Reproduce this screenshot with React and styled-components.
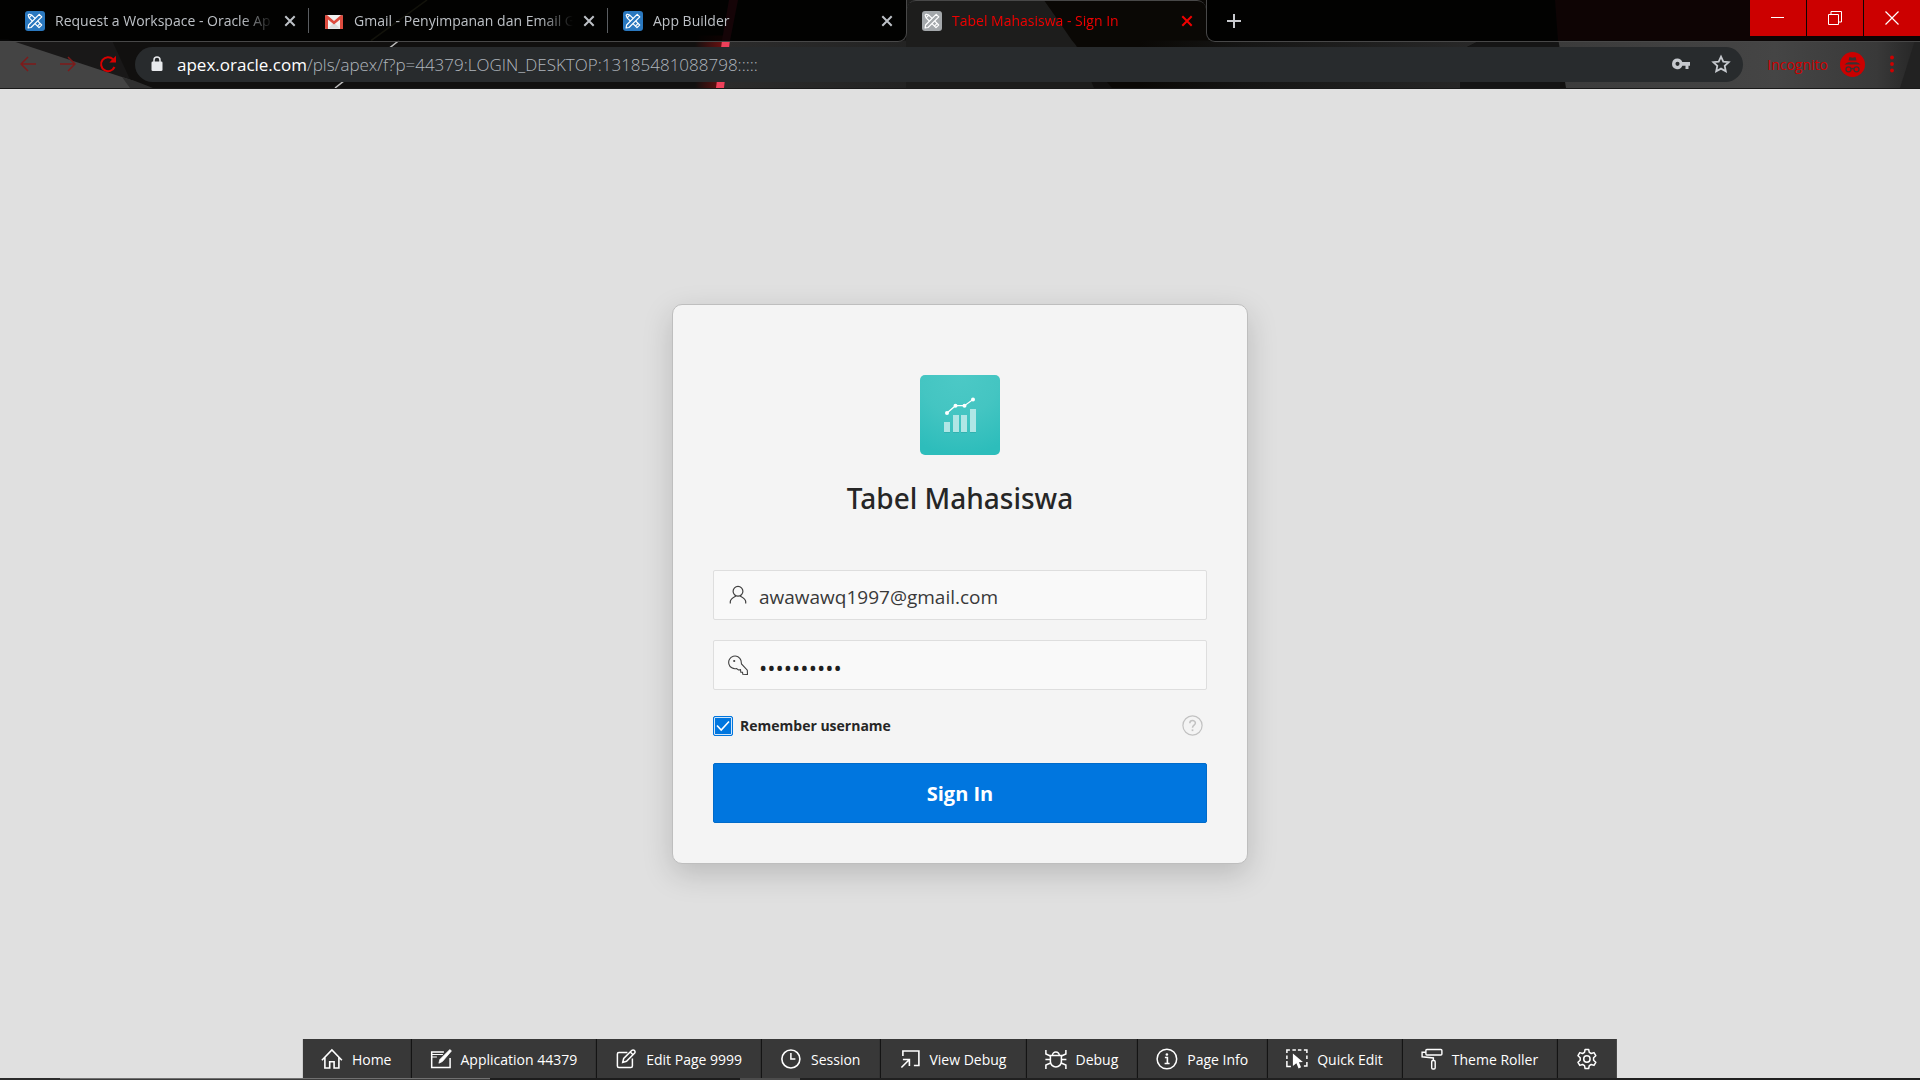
import React from "react";
import styled, { createGlobalStyle, css } from "styled-components";

const GlobalStyle = createGlobalStyle`
  *, *::before, *::after { box-sizing: border-box; }
  body {
    margin: 0;
    background: #e0e0e0;
    font-family: "Open Sans", "Noto Sans", sans-serif;
    font-size: 14px;
    color: #262626;
  }
  button, input { font: inherit; color: inherit; }
  button { margin: 0; padding: 0; border: 0; background: none; cursor: pointer; }
  svg { display: block; flex: none; }
`;

const Page = styled.div`
  display: flex;
  flex-direction: column;
  min-height: 100vh;
`;

/* ---------- Browser frame ---------- */

const Frame = styled.header`
  position: relative;
  isolation: isolate;
  background: #121110;
  border-bottom: 1px solid #191919;
  overflow: hidden;
`;

const ThemeArt = styled.svg`
  position: absolute;
  inset: 0;
  width: 100%;
  height: 100%;
  z-index: -1;
`;

const TabStrip = styled.div`
  display: flex;
  height: 42px;
`;

const stripFill = css`
  background: rgba(0, 0, 0, 0.87);
  border-bottom: 1px solid #484848;
`;

const StripLead = styled.div`
  width: 10px;
  ${stripFill}
`;

const StripRest = styled.div`
  display: flex;
  flex: 1;
  align-items: flex-start;
  justify-content: space-between;
  padding-left: 15px;
  border-left: 1px solid #484848;
  border-bottom-left-radius: 9px;
  ${stripFill}
`;

const TabList = styled.div`
  display: flex;
`;

const Tab = styled.div`
  display: flex;
  align-items: center;
  width: 299px;
  padding: 0 7px 0 15px;
  color: #bdc1c6;
  ${(p) =>
    p.$active
      ? css`
          padding-bottom: 2px;
          color: #f00000;
          border-top: 1px solid #484848;
          border-radius: 9px 9px 0 0;
          background-image: radial-gradient(circle at 9px 9px, transparent 9px, #020202 9px),
            radial-gradient(circle at 0 9px, transparent 9px, #020202 9px);
          background-size: 9px 9px;
          background-position: 0 0, 100% 0;
          background-repeat: no-repeat;
        `
      : stripFill}
  ${(p) =>
    p.$beforeActive &&
    css`
      border-right: 1px solid #484848;
      border-bottom-right-radius: 9px;
    `}
`;

const TabDivider = styled.span`
  flex: none;
  width: 1px;
  height: 25px;
  margin-right: -7px;
  margin-left: 6px;
  background: #5a5d61;
`;

const TabTitle = styled.button`
  display: flex;
  flex: 1;
  align-items: center;
  gap: 10px;
  min-width: 0;
  text-align: left;
  white-space: nowrap;
`;

const TabText = styled.span`
  flex: 1;
  min-width: 0;
  overflow: hidden;
  mask-image: linear-gradient(to right, #000 calc(100% - 36px), transparent calc(100% - 4px));
`;

const IconButton = styled.button`
  display: grid;
  place-items: center;
  width: ${(p) => p.$size || 24}px;
  height: ${(p) => p.$size || 24}px;
  color: ${(p) => p.$color || "inherit"};
`;

const NewTab = styled(IconButton)`
  margin-top: 9px;
`;

const WindowButtons = styled.div`
  display: flex;
  gap: 1px;
`;

const WindowButton = styled.button`
  display: grid;
  place-items: center;
  width: 56px;
  height: 36px;
  background: #cc0000;
  color: #fff;
`;

const NavBar = styled.div`
  display: flex;
  align-items: center;
  height: 46px;
  padding: 0 16px 2px;
`;

const NavGroup = styled.div`
  display: flex;
  gap: 16px;
  padding-right: 15px;
`;

const Omnibox = styled.div`
  display: flex;
  flex: 1;
  align-items: center;
  height: 35px;
  padding: 0 10px 0 16px;
  border-radius: 18px;
  background: #282b2d;
  color: #c6c9ce;
`;

const Address = styled.div`
  flex: 1;
  padding-left: 14px;
  font-size: 17px;
  font-weight: 300;
  color: #b0b6bd;
  outline: none;
`;

const Host = styled.span`
  font-weight: 400;
  color: #fff;
`;

const OmniActions = styled.div`
  display: flex;
  gap: 16px;
`;

const Profile = styled.button`
  display: flex;
  align-items: center;
  gap: 12px;
  margin: 0 15px 0 24px;
  color: #cf0000;
`;

/* ---------- Sign-in page ---------- */

const Main = styled.main`
  position: relative;
  display: flex;
  flex: 1;
  align-items: center;
  justify-content: center;
  padding: 49px 16px 48px;
`;

const Card = styled.form`
  display: flex;
  flex-direction: column;
  width: 100%;
  max-width: 576px;
  padding: 70px 40px 40px;
  border: 1px solid #bebebe;
  border-radius: 10px;
  background: #f4f4f4;
  box-shadow: 0 10px 30px rgba(0, 0, 0, 0.17);
`;

const AppLogo = styled.svg`
  align-self: center;
`;

const Title = styled.h1`
  margin: 25px 0 54px;
  font: 500 28px/36px "Noto Sans", sans-serif;
  text-align: center;
`;

const Fields = styled.div`
  display: grid;
  gap: 20px;
`;

const Field = styled.label`
  display: flex;
  align-items: center;
  height: 50px;
  padding-left: 14px;
  border: 1px solid #dedede;
  border-radius: 2px;
  background: #f9f9f9;
  color: #404040;
`;

const TextInput = styled.input`
  flex: 1;
  min-width: 0;
  height: 100%;
  padding: 3px 12px 0 11px;
  border: 0;
  outline: 0;
  background: none;
  font-size: ${(p) => (p.type === "password" ? 22 : 19)}px;
  color: ${(p) => (p.type === "password" ? "#202020" : "#393939")};
`;

const RememberRow = styled.div`
  display: flex;
  align-items: center;
  justify-content: space-between;
  margin: 25px 4px 27px 0;
`;

const Remember = styled.label`
  display: flex;
  align-items: center;
  gap: 7px;
  font-weight: 700;
`;

const CheckBox = styled.span`
  display: grid;
  color: #fff;
  & > * { grid-area: 1 / 1; }
`;

const CheckInput = styled.input`
  appearance: none;
  width: 20px;
  height: 20px;
  margin: 0;
  border: 1px solid #0076df;
  border-radius: 2px;
  &:checked {
    background: #0076df;
    box-shadow: inset 0 0 0 1px #cfe5fa;
  }
  & + svg { pointer-events: none; }
  &:not(:checked) + svg { visibility: hidden; }
`;

const SignIn = styled.button`
  height: 60px;
  border: 1px solid #006bca;
  border-radius: 2px;
  background: #0076df;
  color: #fff;
  font-size: 20px;
  font-weight: 700;
`;

/* ---------- Developer toolbar ---------- */

const DevBar = styled.nav`
  position: absolute;
  bottom: 0;
  left: 50%;
  display: flex;
  height: 39px;
  transform: translateX(-50%);
  background: #383838;
`;

const DevItem = styled.button`
  display: flex;
  align-items: center;
  gap: 9px;
  padding: 1px 19px 0 18px;
  border-right: 1px solid #101010;
  color: #fff;
  white-space: nowrap;
  &:last-child { border-right: 0; }
`;

/* ---------- Desktop task bar edge ---------- */

const TaskBar = styled.footer`
  display: flex;
  height: 2px;
  background: #202020;
`;

const TaskSlot = styled.div`
  width: ${(p) => p.$width}px;
  background: ${(p) => p.$fill};
  border-top: 1px solid ${(p) => p.$edge || p.$fill};
`;

/* ---------- Drawings ---------- */

const FrameArt = () => (
  <ThemeArt viewBox="0 0 1920 89" preserveAspectRatio="none" aria-hidden="true">
    <defs>
      <linearGradient id="glow" x1="0" x2="1">
        <stop offset="0" stopColor="#8a1010" stopOpacity="0" />
        <stop offset="1" stopColor="#8a1010" stopOpacity="0.8" />
      </linearGradient>
      <linearGradient id="mid" x1="0" x2="1">
        <stop offset="0" stopColor="#2b2b2b" />
        <stop offset="1" stopColor="#1b1b1a" />
      </linearGradient>
      <linearGradient id="fade" x1="0" x2="1">
        <stop offset="0" stopColor="#0a0805" />
        <stop offset="0.300" stopColor="#151514" />
        <stop offset="1" stopColor="#282828" />
      </linearGradient>
      <linearGradient id="right" x1="0" x2="1">
        <stop offset="0" stopColor="#3b3b3b" />
        <stop offset="0.6" stopColor="#454545" />
        <stop offset="0.88" stopColor="#393939" />
        <stop offset="1" stopColor="#252525" />
      </linearGradient>
    </defs>
    <rect width="1920" height="89" fill="#11100f" />
    <path d="M0 41h112l22 48H0z" fill="#191818" />
    <path d="M0 40h8l126 42v7H0z" fill="#444" />
    <path d="M122 78l13 4 18 7h-23z" fill="#2f2f2f" />
    <path d="M427 0L371 41" stroke="#8c8c50" strokeWidth="1.500" />
    <path d="M399 41l-10 8M345 81l-10 8" stroke="#bbb" strokeWidth="1.500" />
    <path d="M730 41h314l50 48H724z" fill="url(#mid)" />
    <path d="M906 0h138l30 41 20 48H906z" fill="#1d1d1c" />
    <path d="M1044 0h176v89h-108l-40-48z" fill="#0a0805" />
    <path d="M1140 41h340l-20 10v38h-320z" fill="url(#fade)" />
    <path d="M1480 41h80v48h-100V51z" fill="#151515" />
    <path d="M1558 38h362v51h-354z" fill="url(#right)" />
    <path d="M1555 0h365v41h-362z" fill="#6a2024" />
    <path d="M1915 41h5v48h-20z" fill="#222" />
    <path d="M695 36h30l-6 53h-24z" fill="url(#glow)" />
    <path d="M729 0h9l-8 41h-8z" fill="#a02038" />
    <path d="M722 41h8l-6 48h-8z" fill="#ee405a" />
  </ThemeArt>
);

const ToolsFavicon = ({ fill }) => (
  <svg width="20" height="20" viewBox="0 0 20 20" aria-hidden="true">
    <rect width="20" height="20" rx="3" fill={fill} />
    <g fill={fill} stroke="#fff" strokeWidth="1.2" strokeLinejoin="round">
      <path d="M4.2 3.2l2.6 0.9 9.9 9.9-2.7 2.7-9.9-9.9-0.9-2.6z" />
      <path d="M6.8 4.1L4.1 6.8M12.4 15.1l2.7-2.7" />
      <path d="M14.2 3.3l2.6 2.6L6 16.5l-2.9 0.5 0.5-3z" />
    </g>
  </svg>
);

const GmailFavicon = () => (
  <svg width="20" height="20" viewBox="-1 0 20 20" aria-hidden="true">
    <rect y="4" width="18" height="14" rx="1.5" fill="#f1f1f1" />
    <path d="M3 17.5l6-6 6 6z" fill="#dcdcdc" />
    <path d="M0 5.5A1.5 1.5 0 0 1 1.5 4H2l7 6 7-6h.5A1.5 1.5 0 0 1 18 5.5V18h-3V8.500l-6 5-6-5V18H1.500A1.500 1.500 0 0 1 0 16.500z" fill="#dd4b3e" />
  </svg>
);

const Glyph = ({ size = 22, sw = 1.4, children, view = 22, fill = "none" }) => (
  <svg
    width={size}
    height={size}
    viewBox={`0 0 ${view} ${view}`}
    fill={fill}
    stroke={fill === "none" ? "currentColor" : "none"}
    strokeWidth={sw}
    aria-hidden="true"
  >
    {children}
  </svg>
);

const CloseIcon = () => (
  <Glyph size={12} view={12} sw={2}><path d="M1.300 1.300l9.400 9.400M10.700 1.300l-9.400 9.400" /></Glyph>
);

const devItems = [
  ["Home", <Glyph><path d="M1 12.200L11 2l10 10.200M4 9.500V20h4.800v-6.200h4.400V20H18V9.500" strokeWidth="1.600" /></Glyph>],
  ["Application 44379", <Glyph>
    <path d="M14 4H1.800v15.500h18.400V10" strokeWidth="1.500" />
    <path d="M2 6.500h11M2 9h5" strokeWidth="1.200" />
    <path d="M20 1.500l1.500 1.500-9 10.500-3.500 1.700 1-3.700z" fill="currentColor" strokeWidth="0.800" />
  </Glyph>],
  ["Edit Page 9999", <Glyph>
    <path d="M12.500 4.500H4a1.500 1.500 0 0 0-1.500 1.500v12A1.500 1.500 0 0 0 4 19.500h12a1.500 1.500 0 0 0 1.500-1.500V10.500" strokeWidth="1.500" />
    <path d="M7.800 14.500l1-4 8-8a1.800 1.800 0 0 1 2.800 2.800l-8 8zM15.400 4l2.700 2.700" strokeWidth="1.500" />
  </Glyph>],
  ["Session", <Glyph><circle cx="11" cy="11" r="9" strokeWidth="1.600" /><path d="M11 5v6h4.500" strokeWidth="1.500" /></Glyph>],
  ["View Debug", <Glyph>
    <path d="M4 8V3h16v14.500h-5" strokeWidth="1.600" />
    <path d="M2.500 19.500l8-8M4 11.500h6.500V18" strokeWidth="1.600" />
  </Glyph>],
  ["Debug", <Glyph>
    <path d="M5.500 7.500h11v6a5.500 5.500 0 0 1-11 0zM7.500 7.500a3.500 3.500 0 0 1 7 0" strokeWidth="1.500" />
    <path d="M.5 11.500h5M16.500 11.500h5M1 2v4l4.500 2M21 2v4l-4.500 2M1 21v-4l4.700-2M21 21v-4l-4.700-2" strokeWidth="1.500" />
  </Glyph>],
  ["Page Info", <Glyph>
    <circle cx="11" cy="11" r="9.800" strokeWidth="1.500" />
    <path d="M9 9.500h2.500v6M8.700 15.500h5" strokeWidth="1.600" />
    <circle cx="11" cy="6.500" r="1.300" fill="currentColor" stroke="none" />
  </Glyph>],
  ["Quick Edit", <Glyph>
    <path d="M1 5V2h3M6.500 2h3.500M12 2h3.500M18 2h3v3M21 7.500V11M21 14v4h-3M1 7.500V11M1 13v3M1 16v2.500h4" strokeWidth="1.500" />
    <path d="M7 5.500l10 8.500-4 .3 2.200 5-2.500 1.200-2.200-5.200L7 18z" fill="currentColor" stroke="none" />
  </Glyph>],
  ["Theme Roller", <Glyph>
    <rect x="5" y="1.500" width="16" height="5.500" rx="1" />
    <path d="M5 4.300H1.200v4.500L12.500 10v2.500" />
    <rect x="10.800" y="12.500" width="3.500" height="8.500" rx="1.200" />
  </Glyph>],
];

const GearIcon = () => (
  <Glyph>
    <path d="M9.200 1.500h3.600l.6 2.900 1.900 1.100 2.800-.9 1.800 3.100-2.200 2v2.600l2.200 2-1.800 3.100-2.800-.9-1.900 1.100-.6 2.900H9.200l-.6-2.900-1.900-1.100-2.800.9-1.800-3.100 2.200-2V9.700l-2.200-2 1.800-3.100 2.800.9 1.900-1.100z" strokeWidth="1.500" strokeLinejoin="round" />
    <circle cx="11" cy="11" r="3.200" strokeWidth="1.500" />
  </Glyph>
);

const tabs = [
  { title: "Request a Workspace - Oracle Ap", icon: <ToolsFavicon fill="#2a78bf" />, divider: true },
  { title: "Gmail - Penyimpanan dan Email G", icon: <GmailFavicon />, divider: true },
  { title: "App Builder", icon: <ToolsFavicon fill="#2a78bf" />, beforeActive: true },
  { title: "Tabel Mahasiswa - Sign In", icon: <ToolsFavicon fill="#a4a8ab" />, active: true },
];

function BrowserFrame() {
  return (
    <Frame>
      <FrameArt />
      <TabStrip>
        <StripLead />
        <TabList>
          {tabs.map((t) => (
            <Tab key={t.title} $active={t.active} $beforeActive={t.beforeActive}>
              <TabTitle type="button" aria-current={t.active ? "page" : undefined}>
                {t.icon}
                <TabText>{t.title}</TabText>
              </TabTitle>
              <IconButton type="button" aria-label="Close tab"><CloseIcon /></IconButton>
              {t.divider && <TabDivider />}
            </Tab>
          ))}
        </TabList>
        <StripRest>
          <NewTab type="button" aria-label="New tab" $color="#c8cace">
            <Glyph size={16} view={16} sw={2}><path d="M8 1v14M1 8h14" /></Glyph>
          </NewTab>
          <WindowButtons>
            <WindowButton type="button" aria-label="Minimize">
              <Glyph size={14} view={14} sw={1}><path d="M0 6.500h13" /></Glyph>
            </WindowButton>
            <WindowButton type="button" aria-label="Restore">
              <Glyph size={14} view={14} sw={1}><path d="M.5 3.500h10v10H.5zM3 3V.5h10.500V11H11" /></Glyph>
            </WindowButton>
            <WindowButton type="button" aria-label="Close window">
              <Glyph size={14} view={14} sw={1.2}><path d="M.5.5l13 13M13.500.5l-13 13" /></Glyph>
            </WindowButton>
          </WindowButtons>
        </StripRest>
      </TabStrip>
      <NavBar>
        <NavGroup>
          <IconButton type="button" aria-label="Back" $color="#7d1a1a">
            <Glyph size={16} view={16} sw={1.5}><path d="M16 8H1.500M8 1L1 8l7 7" /></Glyph>
          </IconButton>
          <IconButton type="button" aria-label="Forward" $color="#7d1a1a">
            <Glyph size={16} view={16} sw={1.5}><path d="M0 8h14.500M8 1l7 7-7 7" /></Glyph>
          </IconButton>
          <IconButton type="button" aria-label="Reload" $color="#d80000">
            <Glyph size={18} view={18} sw={2}>
              <path d="M15.500 12A7 7 0 1 1 14 4.200" />
              <path d="M17 .8V7.500h-6.700z" fill="currentColor" stroke="none" />
            </Glyph>
          </IconButton>
        </NavGroup>
        <Omnibox>
          <svg width="12" height="16" viewBox="0 0 12 16" aria-hidden="true">
            <rect x="0.500" y="5.500" width="11" height="9.500" rx="1.300" fill="#e8eaed" />
            <path d="M3 6V4a3 3 0 0 1 6 0v2" fill="none" stroke="#e8eaed" strokeWidth="1.500" />
          </svg>
          <Address role="textbox" aria-label="Address" tabIndex={0}>
            <Host>apex.oracle.com</Host>/pls/apex/f?p=44379:LOGIN_DESKTOP:13185481088798:::::
          </Address>
          <OmniActions>
            <IconButton type="button" aria-label="Saved passwords">
              <svg width="18" height="12" viewBox="0 0 18 12" aria-hidden="true">
                <path d="M5.500 0.500a5.300 5.300 0 1 0 4.800 7.300H13.500V11h3V7.800H18V4H10.300A5.300 5.300 0 0 0 5.500.5zm0 3.300a2 2 0 1 1 0 4.100 2 2 0 0 1 0-4.100z" fill="#c6c9ce" fillRule="evenodd" />
              </svg>
            </IconButton>
            <IconButton type="button" aria-label="Bookmark this page">
              <Glyph size={20} view={20} sw={1.8}>
                <path d="M10 2.600l2.300 5 5.400.6-4 3.700 1.100 5.400-4.800-2.700-4.800 2.700 1.100-5.400-4-3.700 5.400-.6z" />
              </Glyph>
            </IconButton>
          </OmniActions>
        </Omnibox>
        <Profile type="button">
          Incognito
          <svg width="25" height="25" viewBox="0 0 25 25" aria-hidden="true">
            <circle cx="12.500" cy="12.500" r="12.500" fill="#cc0000" />
            <g fill="#3a3030">
              <path d="M9.500 5l3 .7 3-.7 1 3.500h-8z" />
              <path d="M4.500 12.500q2-2 4-2.200h8q2 .2 4 2.200z" />
            </g>
            <g fill="none" stroke="#3a3030" strokeWidth="1.300">
              <circle cx="8.500" cy="17.300" r="2.500" />
              <circle cx="16.500" cy="17.300" r="2.500" />
              <path d="M11 17q1.500-1 3 0" />
            </g>
          </svg>
        </Profile>
        <IconButton type="button" aria-label="Browser menu" $color="#cf0000">
          <svg width="4" height="18" viewBox="0 0 4 18" fill="currentColor" aria-hidden="true">
            <circle cx="2" cy="2.500" r="1.900" /><circle cx="2" cy="9" r="1.900" /><circle cx="2" cy="15.500" r="1.900" />
          </svg>
        </IconButton>
      </NavBar>
    </Frame>
  );
}

export default function App() {
  return (
    <Page>
      <GlobalStyle />
      <BrowserFrame />
      <Main>
        <Card onSubmit={(e) => e.preventDefault()}>
          <AppLogo width="80" height="80" viewBox="0 0 80 80" aria-hidden="true">
            <defs>
              <radialGradient id="logo" cx="0.500" cy="0" r="1">
                <stop offset="0" stopColor="#4cc9c6" />
                <stop offset="0.500" stopColor="#44c5c2" />
                <stop offset="1" stopColor="#2dbdbb" />
              </radialGradient>
            </defs>
            <rect width="80" height="80" rx="5" fill="url(#logo)" />
            <path d="M24 48h6v10h-6zM33 41h6v17h-6zM41 41h6v17h-6zM50 35h6v23h-6z" fill="#1d8d8b" opacity="0.300" />
            <path d="M24 47h6v10h-6zM33 40h6v17h-6zM41 40h6v17h-6zM50 34h6v23h-6z" fill="#b0e6e5" />
            <path d="M27 38l8.500-7.300h9L53 24.500" fill="none" stroke="#fff" strokeWidth="1.200" />
            <g fill="#fff">
              <circle cx="27" cy="38" r="2" /><circle cx="35.500" cy="30.700" r="2" />
              <circle cx="44.500" cy="30.700" r="2" /><circle cx="53" cy="24.500" r="2" />
            </g>
          </AppLogo>
          <Title>Tabel Mahasiswa</Title>
          <Fields>
            <Field>
              <Glyph size={20} view={20} sw={1.2}>
                <circle cx="10" cy="6.300" r="4.900" />
                <path d="M2.300 18.500v-2c0-2.500 3.200-4.200 5.500-5.500M17.700 18.500v-2c0-2.500-3.200-4.200-5.500-5.500" />
              </Glyph>
              <TextInput type="text" aria-label="Username" defaultValue="awawawq1997@gmail.com" />
            </Field>
            <Field>
              <Glyph size={20} view={20} sw={1.1}>
                <path d="M13 5.500A6.300 6.300 0 1 0 8.500 13.500l2 1.500 2-.3.300 2.500h1.700l.3 2 4.700.3-.2-4.300-5.800-6.200z" />
                <circle cx="6.200" cy="6" r="1.100" fill="currentColor" stroke="none" />
              </Glyph>
              <TextInput type="password" aria-label="Password" defaultValue="mahasiswa1" />
            </Field>
          </Fields>
          <RememberRow>
            <Remember>
              <CheckBox>
                <CheckInput type="checkbox" defaultChecked />
                <Glyph size={20} view={20} sw={1.6}><path d="M4 9.500l4.200 4.500L16 5.500" /></Glyph>
              </CheckBox>
              Remember username
            </Remember>
            <IconButton type="button" aria-label="Help" $size={21} $color="#c2c2c2">
              <Glyph size={21} view={21} sw={1.2}>
                <circle cx="10.500" cy="10.500" r="9.600" />
                <path d="M7.800 8.300c0-3.700 5.600-3.500 5.600-.2 0 2.100-2.900 2.100-2.900 4.700" strokeWidth="1.500" />
                <path d="M10.500 14.400v1.700" strokeWidth="1.700" />
              </Glyph>
            </IconButton>
          </RememberRow>
          <SignIn type="submit">Sign In</SignIn>
        </Card>
        <DevBar aria-label="Developer toolbar">
          {devItems.map(([label, icon]) => (
            <DevItem key={label} type="button">{icon}{label}</DevItem>
          ))}
          <DevItem type="button" aria-label="Settings"><GearIcon /></DevItem>
        </DevBar>
      </Main>
      <TaskBar>
        <TaskSlot $width={60} $fill="#2b2b2b" />
        <TaskSlot $width={430} $fill="#3c3c3c" $edge="#707070" />
        <TaskSlot $width={250} $fill="#1c1c1c" />
        <TaskSlot $width={60} $fill="#4c4c4c" />
      </TaskBar>
    </Page>
  );
}
